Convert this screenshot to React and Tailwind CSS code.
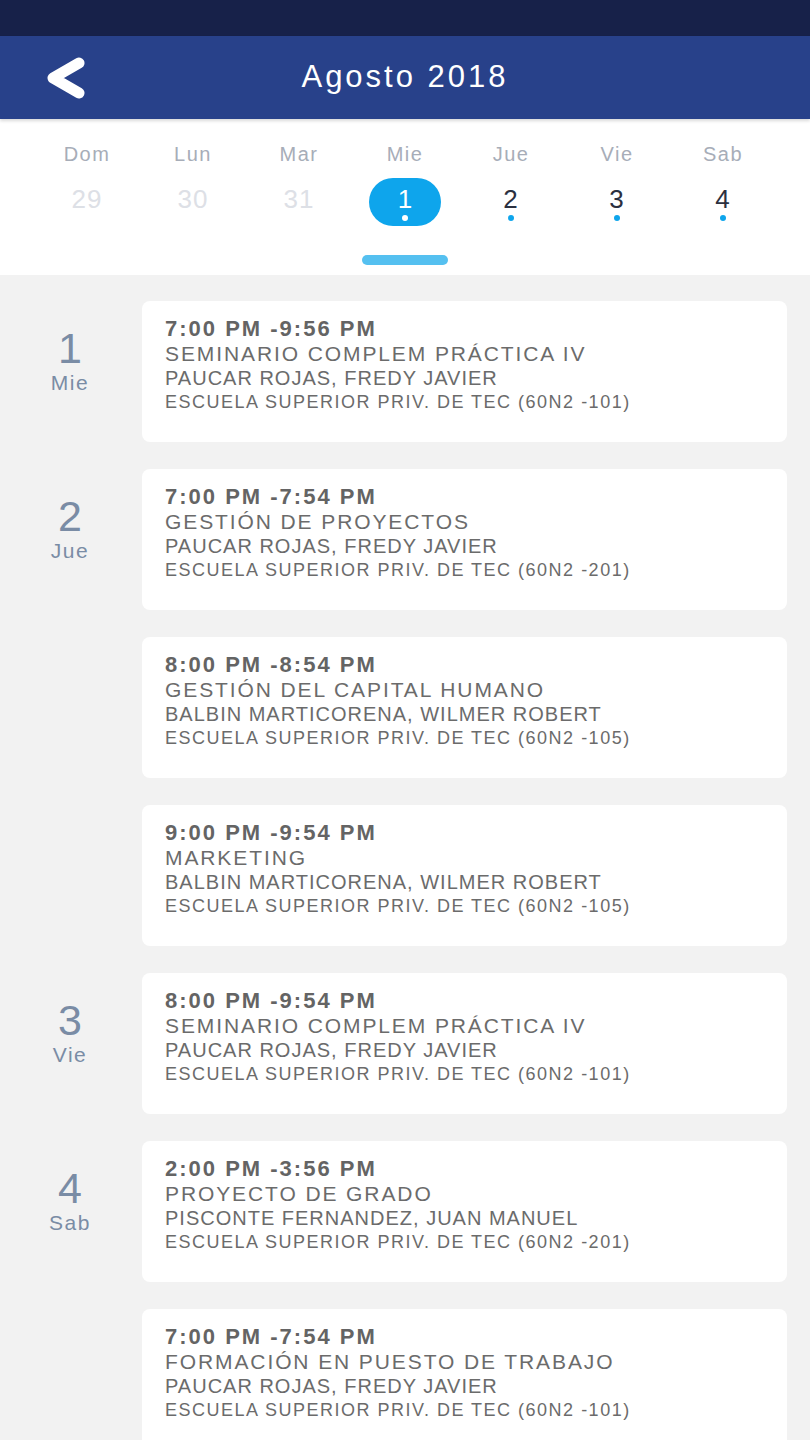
import React from "react";

const days = [
  { l: "Dom", d: "29", muted: true },
  { l: "Lun", d: "30", muted: true },
  { l: "Mar", d: "31", muted: true },
  { l: "Mie", d: "1", selected: true },
  { l: "Jue", d: "2", dot: true },
  { l: "Vie", d: "3", dot: true },
  { l: "Sab", d: "4", dot: true },
];

const events = [
  { num: "1", day: "Mie", time: "7:00 PM -9:56 PM", title: "SEMINARIO COMPLEM PRÁCTICA IV", prof: "PAUCAR ROJAS, FREDY JAVIER", place: "ESCUELA SUPERIOR PRIV. DE TEC (60N2 -101)" },
  { num: "2", day: "Jue", time: "7:00 PM -7:54 PM", title: "GESTIÓN DE PROYECTOS", prof: "PAUCAR ROJAS, FREDY JAVIER", place: "ESCUELA SUPERIOR PRIV. DE TEC (60N2 -201)" },
  { time: "8:00 PM -8:54 PM", title: "GESTIÓN DEL CAPITAL HUMANO", prof: "BALBIN MARTICORENA, WILMER ROBERT", place: "ESCUELA SUPERIOR PRIV. DE TEC (60N2 -105)" },
  { time: "9:00 PM -9:54 PM", title: "MARKETING", prof: "BALBIN MARTICORENA, WILMER ROBERT", place: "ESCUELA SUPERIOR PRIV. DE TEC (60N2 -105)" },
  { num: "3", day: "Vie", time: "8:00 PM -9:54 PM", title: "SEMINARIO COMPLEM PRÁCTICA IV", prof: "PAUCAR ROJAS, FREDY JAVIER", place: "ESCUELA SUPERIOR PRIV. DE TEC (60N2 -101)" },
  { num: "4", day: "Sab", time: "2:00 PM -3:56 PM", title: "PROYECTO DE GRADO", prof: "PISCONTE FERNANDEZ, JUAN MANUEL", place: "ESCUELA SUPERIOR PRIV. DE TEC (60N2 -201)" },
  { time: "7:00 PM -7:54 PM", title: "FORMACIÓN EN PUESTO DE TRABAJO", prof: "PAUCAR ROJAS, FREDY JAVIER", place: "ESCUELA SUPERIOR PRIV. DE TEC (60N2 -101)" },
];

export default function App() {
  return (
    <div className="w-[810px] h-[1440px] overflow-hidden bg-[#f2f2f2]" style={{ fontFamily: '"Liberation Sans", Arial, sans-serif' }}>
      <div className="h-[36px] bg-[#172149]" />
      <div className="relative h-[83px] bg-[#28418a] flex items-center justify-center shadow-[0_2px_3px_rgba(0,0,0,0.15)]">
        <svg className="absolute left-[42px] top-[20px]" width="46" height="44" viewBox="0 0 46 44">
          <path d="M37 7 L11 22 L37 37" fill="none" stroke="#ffffff" strokeWidth="11" strokeLinecap="round" strokeLinejoin="round" />
        </svg>
        <div className="text-white text-[31px] font-medium tracking-[3px]">Agosto 2018</div>
      </div>
      <div className="bg-white h-[156px] px-[34px] pt-[22px]">
        <div className="grid grid-cols-7">
          {days.map((d) => (
            <div key={d.l} className="flex flex-col items-center">
              <div className="text-[20px] leading-[26px] text-[#a7adb8] tracking-[1.5px]">{d.l}</div>
              <div className="mt-[10px] h-[50px] flex items-center justify-center">
                {d.selected ? (
                  <div className="w-[72px] h-[48px] rounded-full bg-[#0ea5ec] flex flex-col items-center justify-center">
                    <div className="text-white text-[26px] leading-[26px] mt-[2px]">1</div>
                    <div className="w-[6px] h-[6px] rounded-full bg-white mt-[3px]" />
                  </div>
                ) : (
                  <div className="flex flex-col items-center">
                    <div className={`text-[26px] leading-[26px] mt-[2px] tracking-[1px] ${d.muted ? "text-[#dde0e6]" : "text-[#2b3040]"}`}>{d.d}</div>
                    <div className={`w-[6px] h-[6px] rounded-full mt-[3px] ${d.dot ? "bg-[#0ea5ec]" : "bg-transparent"}`} />
                  </div>
                )}
              </div>
            </div>
          ))}
        </div>
        <div className="flex justify-center mt-[28px]">
          <div className="w-[86px] h-[10px] rounded-full bg-[#55c0f0]" />
        </div>
      </div>
      <div className="pt-[26px] flex flex-col gap-[27px] pr-[23px]">
        {events.map((e, i) => (
          <div key={i} className="flex">
            <div className="w-[142px] flex flex-col items-center pr-[2px] pt-[23px]">
              {e.num && (
                <>
                  <div className="text-[43px] leading-[48px] text-[#7a8ca5]">{e.num}</div>
                  <div className="text-[21px] leading-[22px] text-[#7a8ca5] tracking-[1.5px]">{e.day}</div>
                </>
              )}
            </div>
            <div className="flex-1 h-[141px] bg-white rounded-[8px] pl-[23px] pt-[15px] text-[#6b6b6b]">
              <div className="text-[22px] leading-[25px] font-bold text-[#646464] tracking-[2px]">{e.time}</div>
              <div className="text-[21px] leading-[25px] tracking-[1.9px]">{e.title}</div>
              <div className="text-[20px] leading-[24px] tracking-[1px]">{e.prof}</div>
              <div className="text-[18px] leading-[24px] tracking-[1.5px]">{e.place}</div>
            </div>
          </div>
        ))}
      </div>
    </div>
  );
}
